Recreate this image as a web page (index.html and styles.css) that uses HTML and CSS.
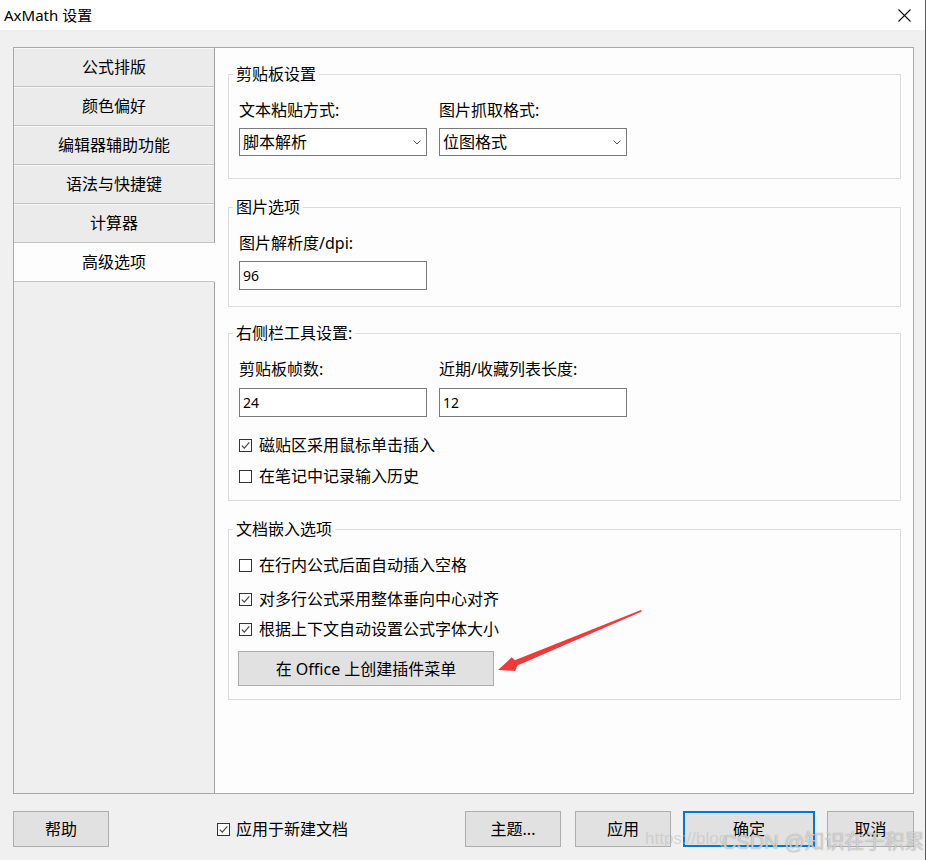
FILE: index.html
```html
<!DOCTYPE html>
<html lang="zh-CN">
<head>
<meta charset="utf-8">
<title>AxMath 设置</title>
<link rel="stylesheet" href="styles.css">
</head>
<body>
<div class="window">
  <div class="titlebar">
    <span class="title">AxMath 设置</span>
    <svg class="close" width="13" height="13" viewBox="0 0 13 13"><path d="M0.5 0.5 L12.5 12.5 M12.5 0.5 L0.5 12.5" stroke="#111" stroke-width="1.1" fill="none"/></svg>
  </div>
  <div class="client">
    <div class="panel">
      <div class="tabs">
        <div class="tab">公式排版</div>
        <div class="tab">颜色偏好</div>
        <div class="tab">编辑器辅助功能</div>
        <div class="tab">语法与快捷键</div>
        <div class="tab">计算器</div>
        <div class="tab active">高级选项</div>
        <div class="tab-fill"></div>
      </div>
      <div class="content">
        <fieldset class="group g1">
          <legend>剪贴板设置</legend>
          <div class="row2">
            <div class="field">
              <div class="label">文本粘贴方式:</div>
              <div class="select"><span>脚本解析</span><svg width="8" height="5" viewBox="0 0 8 5"><path d="M0.5 0.5 L4 4 L7.5 0.5" stroke="#555" stroke-width="1" fill="none"/></svg></div>
            </div>
            <div class="field">
              <div class="label">图片抓取格式:</div>
              <div class="select"><span>位图格式</span><svg width="8" height="5" viewBox="0 0 8 5"><path d="M0.5 0.5 L4 4 L7.5 0.5" stroke="#555" stroke-width="1" fill="none"/></svg></div>
            </div>
          </div>
        </fieldset>
        <fieldset class="group g2">
          <legend>图片选项</legend>
          <div class="field">
            <div class="label">图片解析度/dpi:</div>
            <div class="input">96</div>
          </div>
        </fieldset>
        <fieldset class="group g3">
          <legend>右侧栏工具设置:</legend>
          <div class="row2">
            <div class="field">
              <div class="label">剪贴板帧数:</div>
              <div class="input">24</div>
            </div>
            <div class="field">
              <div class="label">近期/收藏列表长度:</div>
              <div class="input">12</div>
            </div>
          </div>
          <div class="check c31"><span class="box checked"><svg width="11" height="11" viewBox="0 0 11 11"><path d="M1.8 5.6 L4.3 8.1 L9.3 2.4" stroke="#444" stroke-width="1.2" fill="none"/></svg></span><span>磁贴区采用鼠标单击插入</span></div>
          <div class="check c32"><span class="box"></span><span>在笔记中记录输入历史</span></div>
        </fieldset>
        <fieldset class="group g4">
          <legend>文档嵌入选项</legend>
          <div class="check c41"><span class="box"></span><span>在行内公式后面自动插入空格</span></div>
          <div class="check c42"><span class="box checked"><svg width="11" height="11" viewBox="0 0 11 11"><path d="M1.8 5.6 L4.3 8.1 L9.3 2.4" stroke="#444" stroke-width="1.2" fill="none"/></svg></span><span>对多行公式采用整体垂向中心对齐</span></div>
          <div class="check c43"><span class="box checked"><svg width="11" height="11" viewBox="0 0 11 11"><path d="M1.8 5.6 L4.3 8.1 L9.3 2.4" stroke="#444" stroke-width="1.2" fill="none"/></svg></span><span>根据上下文自动设置公式字体大小</span></div>
          <div class="btn office">在 Office 上创建插件菜单</div>
        </fieldset>
      </div>
    </div>
    <div class="footer">
      <div class="btn help">帮助</div>
      <div class="check apply-new"><span class="box checked"><svg width="11" height="11" viewBox="0 0 11 11"><path d="M1.8 5.6 L4.3 8.1 L9.3 2.4" stroke="#444" stroke-width="1.2" fill="none"/></svg></span><span>应用于新建文档</span></div>
      <div class="actions">
        <div class="btn theme">主题...</div>
        <div class="btn apply">应用</div>
        <div class="btn ok">确定</div>
        <div class="btn cancel">取消</div>
      </div>
    </div>
  </div>
  <svg class="arrow" width="160" height="75" viewBox="0 0 160 75"><polygon points="8,65 21.7,52.3 24.8,55.2 151,5 151.8,6.4 27.4,60.6 25.2,66" fill="#f03a3a"/></svg>
  <div class="watermark"><span class="wm-url">https://blog</span><span class="wm-name">CSDN @知识在于积累</span></div>
</div>
</body>
</html>
```

FILE: styles.css
```css
* { box-sizing: border-box; }

body {
  margin: 0;
  background: #fff;
  font-family: "Noto Sans", "Noto Sans CJK SC", sans-serif;
  font-size: 16px;
  color: #000;
}

.window {
  position: relative;
  width: 926px;
  height: 860px;
  border-right: 1px solid #5a5a5a;
  display: flex;
  flex-direction: column;
  overflow: hidden;
}

.titlebar {
  height: 30px;
  flex: none;
  background: #fff;
  display: flex;
  align-items: center;
  justify-content: space-between;
  padding: 0 14px 0 4px;
}

.title {
  font-size: 15px;
  line-height: 20px;
}

.close { display: block; margin-top: 1px; }

.client {
  flex: 1;
  background: #f0f0f0;
  padding: 17px 11px 0 13px;
  display: flex;
  flex-direction: column;
}

.panel {
  height: 747px;
  flex: none;
  border: 1px solid #a9a9a9;
  background: #fdfdfd;
  display: flex;
}

.tabs {
  width: 201px;
  flex: none;
  display: flex;
  flex-direction: column;
}

.tab {
  height: 39px;
  flex: none;
  background: #ebebeb;
  border-bottom: 1px solid #c4c4c4;
  border-right: 1px solid #a0a0a0;
  box-shadow: inset 0 1px 0 #f7f7f7;
  display: flex;
  align-items: center;
  justify-content: center;
  line-height: 20px;
}

.tab.active {
  background: #fdfdfd;
  border-right-color: transparent;
  box-shadow: none;
}

.tab-fill {
  flex: 1;
  background: #efefef;
  border-right: 1px solid #a0a0a0;
}

.content {
  flex: 1;
  padding: 16px 12px 0 13px;
  display: flex;
  flex-direction: column;
}

.group {
  margin: 0;
  min-width: 0;
  border: 1px solid #dcdcdc;
  padding: 16px 10px 22px 10px;
}

.group legend {
  padding: 0 3px;
  margin-left: -6px;
  line-height: 20px;
}

.g2 { margin-top: 18px; padding-bottom: 16px; }
.g3 { margin-top: 16px; padding-bottom: 14px; }
.g4 { margin-top: 18px; padding-bottom: 13px; }

.row2 {
  display: flex;
  gap: 12px;
}

.field { width: 188px; }

.label {
  line-height: 20px;
  height: 20px;
  margin-bottom: 8px;
}

.g3 .label { margin-bottom: 9px; }

.select {
  height: 28px;
  border: 1px solid #7a7a7a;
  background: #fff;
  display: flex;
  align-items: center;
  justify-content: space-between;
  padding: 0 5px 0 3px;
  line-height: 20px;
}

.select svg { display: block; }

.input {
  height: 29px;
  border: 1px solid #7a7a7a;
  background: #fff;
  padding-left: 3px;
  display: flex;
  align-items: center;
  font-size: 14px;
}

.check {
  display: flex;
  align-items: center;
  gap: 7px;
  height: 20px;
  line-height: 20px;
}

.box {
  width: 13px;
  height: 13px;
  flex: none;
  border: 1px solid #333;
  background: #fff;
  display: flex;
}

.box svg { display: block; }

.c31 { margin-top: 18px; }
.c32 { margin-top: 11px; }
.c41 { margin-top: 0; }
.c42 { margin-top: 14px; }
.c43 { margin-top: 10px; }

.btn {
  height: 36px;
  border: 1px solid #adadad;
  background: #e1e1e1;
  display: flex;
  align-items: center;
  justify-content: center;
  line-height: 20px;
}

.office {
  width: 256px;
  height: 35px;
  margin: 12px 0 0 -1px;
}

.footer {
  display: flex;
  align-items: center;
  padding-top: 17px;
}

.help { width: 96px; }

.apply-new { margin-left: 108px; gap: 6px; }

.actions {
  margin-left: auto;
  display: flex;
  gap: 12px;
}

.theme { width: 96px; margin-right: 2px; }
.apply { width: 96px; }
.ok { width: 132px; border: 2px solid #0078d7; }
.cancel { width: 87px; }

.arrow {
  position: absolute;
  left: 490px;
  top: 605px;
}

.watermark {
  position: absolute;
  left: 645px;
  top: 826px;
  height: 26px;
  width: 280px;
  pointer-events: none;
}

.wm-url {
  position: absolute;
  left: 0;
  top: 3px;
  font-family: "Liberation Sans", sans-serif;
  font-size: 17px;
  color: rgba(190, 190, 190, 0.55);
  white-space: nowrap;
}

.wm-name {
  position: absolute;
  left: 77px;
  top: 0;
  font-family: "Liberation Sans", "Noto Sans CJK SC", sans-serif;
  font-size: 20px;
  color: rgba(240, 240, 240, 0.7);
  text-shadow: 0 0 1px rgba(110, 110, 110, 0.8);
  white-space: nowrap;
}
```
